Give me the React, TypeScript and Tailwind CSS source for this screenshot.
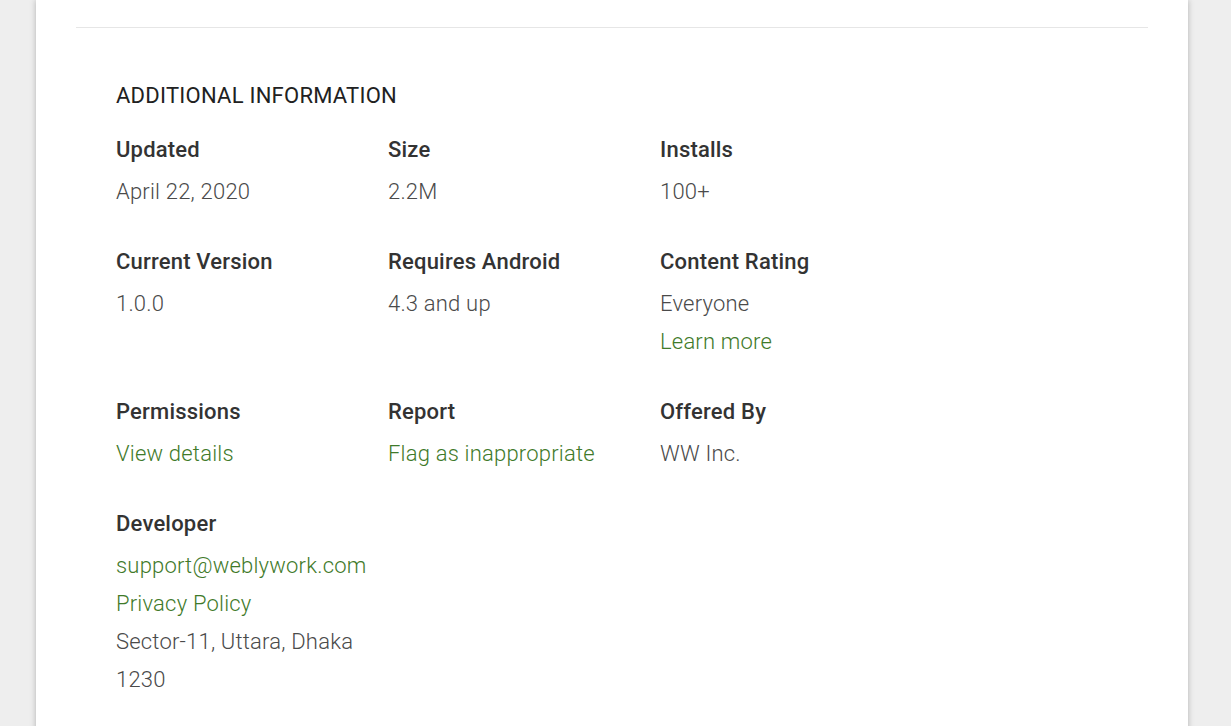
import React from "react";

type Item = { label: string; lines: { text: string; link?: boolean }[] };

const rows: Item[][] = [
  [
    { label: "Updated", lines: [{ text: "April 22, 2020" }] },
    { label: "Size", lines: [{ text: "2.2M" }] },
    { label: "Installs", lines: [{ text: "100+" }] },
  ],
  [
    { label: "Current Version", lines: [{ text: "1.0.0" }] },
    { label: "Requires Android", lines: [{ text: "4.3 and up" }] },
    { label: "Content Rating", lines: [{ text: "Everyone" }, { text: "Learn more", link: true }] },
  ],
  [
    { label: "Permissions", lines: [{ text: "View details", link: true }] },
    { label: "Report", lines: [{ text: "Flag as inappropriate", link: true }] },
    { label: "Offered By", lines: [{ text: "WW Inc." }] },
  ],
  [
    {
      label: "Developer",
      lines: [
        { text: "support@weblywork.com", link: true },
        { text: "Privacy Policy", link: true },
        { text: "Sector-11, Uttara, Dhaka 1230" },
      ],
    },
  ],
];

function Cell({ item }: { item: Item }) {
  return (
    <div className="w-[272px] pr-4">
      <div className="text-[22px] leading-[24px] font-medium text-[#333333] tracking-[0.2px]">{item.label}</div>
      <div className="mt-[11px] text-[22px] leading-[38px] font-light text-[#4a4a4a] tracking-[0.2px]">
        {item.lines.map((l, i) =>
          l.link ? (
            <div key={i}>
              <a className="text-[#3f7a2a]" href="#">{l.text}</a>
            </div>
          ) : (
            <div key={i}>{l.text}</div>
          )
        )}
      </div>
    </div>
  );
}

export default function App() {
  return (
    <div
      className="min-h-[726px] h-[726px] overflow-hidden bg-[#eeeeee]"
      style={{ fontFamily: "Roboto, 'Noto Sans', Arial, sans-serif" }}
    >
      <div className="mx-[36px] w-[1152px] h-[800px] bg-white shadow-[0_0_6px_rgba(0,0,0,0.25)] px-[40px]">
        <div className="h-[28px] border-b border-[#e6e6e6]"></div>
        <div className="px-[40px] pt-[55px]">
          <h2 className="text-[22px] leading-[26px] font-normal text-[#212121] tracking-[0.25px]">
            ADDITIONAL INFORMATION
          </h2>
          <div className="mt-[29px] flex flex-col gap-[39px]">
            {rows.map((r, i) => (
              <div key={i} className="flex">
                {r.map((it, j) => (
                  <Cell key={j} item={it} />
                ))}
              </div>
            ))}
          </div>
        </div>
      </div>
    </div>
  );
}
